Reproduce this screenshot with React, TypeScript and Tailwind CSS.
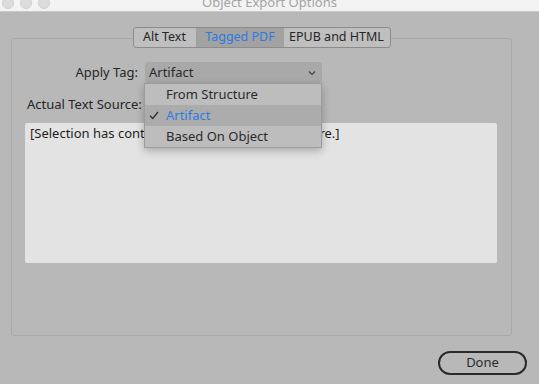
import React from "react";

export default function App() {
  const font = { fontFamily: '"Noto Sans", "Open Sans", sans-serif' };
  return (
    <div className="w-[539px] h-[384px] bg-[#b8b8b8] overflow-hidden flex flex-col text-[13px] text-[#262626]" style={font}>
      {/* title bar */}
      <div className="relative h-[12px] bg-[#f4f3f3] border-b border-[#c9c9c9] overflow-hidden shrink-0">
        <div className="flex gap-[6px] pl-[2px] -mt-[3px]">
          <div className="w-[12px] h-[12px] rounded-full bg-[#dcdcdc] border border-[#d0d0d0]" />
          <div className="w-[12px] h-[12px] rounded-full bg-[#dcdcdc] border border-[#d0d0d0]" />
          <div className="w-[12px] h-[12px] rounded-full bg-[#dcdcdc] border border-[#d0d0d0]" />
        </div>
        <div className="absolute left-0 right-0 -top-[7px] text-center text-[#a3a3a3] text-[13px] leading-[18px]">
          Object Export Options
        </div>
      </div>

      {/* panel */}
      <div className="ml-[11px] mr-[27px] mt-[26px] h-[298px] border border-[#a9a9a9] rounded-[3px] flex flex-col">
        <div className="-mt-[12px] self-center flex h-[21px] border border-[#8c8c8c] rounded-[3px] overflow-hidden bg-[#bfbfbf] text-[12.5px]">
          <div className="w-[63px] flex items-center justify-center border-r border-[#a0a0a0]">Alt Text</div>
          <div className="w-[87px] flex items-center justify-center bg-[#a2a2a2] text-[#2c7be0]">Tagged PDF</div>
          <div className="w-[106px] flex items-center justify-center">EPUB and HTML</div>
        </div>

        <div className="relative mt-[14px] flex items-center">
          <div className="w-[127px] text-right pr-[1px]">Apply Tag:</div>
          <div className="ml-[6px] relative w-[177px]">
            <div className="h-[21px] rounded-[3px] bg-[#a9a9a9] flex items-center justify-between pl-[4px] pr-[6px] text-[#2b2b2b]">
              <span>Artifact</span>
              <svg width="8" height="6" viewBox="0 0 8 6" className="mt-[1px]">
                <path d="M1 1.5 L4 4.5 L7 1.5" fill="none" stroke="#444" strokeWidth="1.2" />
              </svg>
            </div>
            {/* dropdown menu */}
            <div className="absolute left-[-1px] top-[21px] w-[178px] bg-[#bdbdbd] border border-[#9c9c9c] shadow-[0_3px_8px_rgba(0,0,0,0.25)] z-10 flex flex-col">
              <div className="h-[21px] flex items-center pl-[21px] text-[#2b2b2b]">From Structure</div>
              <div className="h-[21px] flex items-center bg-[#acacac] text-[#2c7be0] relative">
                <svg width="10" height="9" viewBox="0 0 10 9" className="absolute left-[4px] top-[6px]">
                  <path d="M1 4.8 L3.7 7.5 L9 1" fill="none" stroke="#333" strokeWidth="1.4" />
                </svg>
                <span className="pl-[21px]">Artifact</span>
              </div>
              <div className="h-[21px] flex items-center pl-[21px] text-[#2b2b2b]">Based On Object</div>
            </div>
          </div>
        </div>

        <div className="mt-[12px] pl-[15px] leading-[18px]">Actual Text Source:</div>

        <div className="mt-[10px] ml-[13px] w-[472px] h-[140px] bg-[#e3e3e3] rounded-[2px] px-[5px] pt-[1px] leading-[18px] text-[#1f1f1f]">
          [Selection has content that cannot be shown here.]
        </div>
      </div>

      <div className="flex justify-end mr-[12px] mt-[15px]">
        <div className="w-[89px] h-[24px] rounded-full border-2 border-[#2a2a2a] flex items-center justify-center text-[#2b2b2b]">
          Done
        </div>
      </div>
    </div>
  );
}
